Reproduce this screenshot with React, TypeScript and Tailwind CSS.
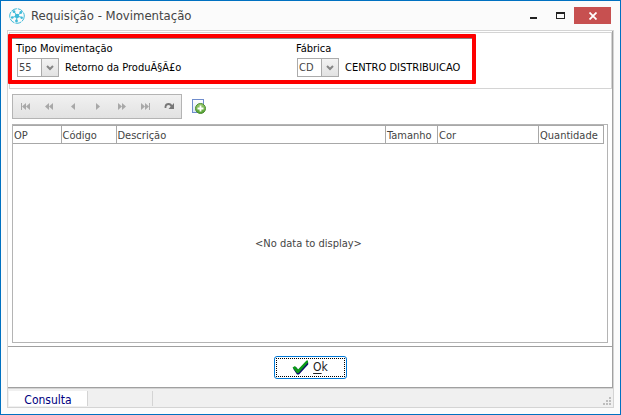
import { useState } from 'react';

const COLUMNS = [
  { label: 'OP', width: 'w-[48px]' },
  { label: 'Código', width: 'w-[55px]' },
  { label: 'Descrição', width: '' },
  { label: 'Tamanho', width: 'w-[52px]' },
  { label: 'Cor', width: 'w-[101px]' },
  { label: 'Quantidade', width: 'w-[65px]' },
];

const NAV_BUTTONS = [
  { label: 'Primeiro', path: 'M1 2h1v7h-1zM6 2v7L2 5.5zM10 2v7L6 5.5z' },
  { label: 'Página anterior', path: 'M5 2v7L1 5.5zM9 2v7L5 5.5z' },
  { label: 'Anterior', path: 'M7 2v7L3 5.5z' },
  { label: 'Próximo', path: 'M4 2v7L8 5.5z' },
  { label: 'Próxima página', path: 'M2 2v7L6 5.5zM6 2v7L10 5.5z' },
  { label: 'Último', path: 'M1 2v7L5 5.5zM5 2v7L9 5.5zM9 2h1v7h-1z' },
];

function AppIcon() {
  return (
    <svg className="w-4 h-4" viewBox="0 0 16 16" fill="none" stroke="#3fbad8">
      <circle cx="8" cy="8" r="7.300" strokeWidth="1" strokeDasharray="6 1" />
      <path d="M8 8L5 3.500M8 8l4-3.500M8 8l5 1.500M8 8l-.5 5M8 8L3 9.500" strokeWidth="1" />
      <g fill="#3fbad8" stroke="none">
        <circle cx="8" cy="8" r="2.200" />
        <circle cx="5" cy="3.700" r="1.400" />
        <circle cx="11.800" cy="4.500" r="1.400" />
        <circle cx="12.700" cy="9.700" r="1.200" />
        <circle cx="7.500" cy="13" r="1.400" />
        <circle cx="3.200" cy="9.500" r="1.300" />
      </g>
    </svg>
  );
}

function AddIcon() {
  return (
    <svg className="w-4 h-4" viewBox="0 0 16 16">
      <defs>
        <linearGradient id="page" x1="0" y1="0" x2="0" y2="1">
          <stop offset="0" stopColor="#ffffff" />
          <stop offset="1" stopColor="#d5e5f5" />
        </linearGradient>
        <linearGradient id="plus" x1="0" y1="0" x2="0" y2="1">
          <stop offset="0" stopColor="#9ccb74" />
          <stop offset="1" stopColor="#4fa02a" />
        </linearGradient>
      </defs>
      <rect x="1.500" y=".5" width="11" height="13" fill="url(#page)" stroke="#6f8ccc" />
      <circle cx="9.500" cy="9.500" r="5" fill="url(#plus)" stroke="#4c8c30" />
      <path d="M9.500 6.500v6M6.500 9.500h6" stroke="#fff" strokeWidth="1.800" />
    </svg>
  );
}

function Combo({ id, label, options, description }: { id: string; label: string; options: string[]; description: string }) {
  const [value, setValue] = useState(options[0]);

  return (
    <div className="flex flex-col gap-[1px]">
      <label htmlFor={id} className="leading-4">{label}</label>
      <div className="flex items-center gap-[6px]">
        <div className="relative ml-[1px]">
          <select
            id={id}
            value={value}
            onChange={e => setValue(e.target.value)}
            className="block w-[42px] h-[19px] appearance-none rounded-none border border-[#ababab] bg-white pl-[1px] pr-4 leading-4 text-[#444]"
          >
            {options.map(o => <option key={o}>{o}</option>)}
          </select>
          <span className="pointer-events-none absolute right-0 top-0 flex h-[19px] w-[18px] items-center justify-center border border-[#ababab] bg-linear-to-b from-[#f3f3f3] to-[#e2e2e2]">
            <svg className="w-[8px] h-[6px]" viewBox="0 0 8 6" fill="none" stroke="#868686" strokeWidth="2">
              <path d="M1 1l3 3 3-3" />
            </svg>
          </span>
        </div>
        <span className="leading-4">{description}</span>
      </div>
    </div>
  );
}

export default function App() {
  return (
    <div className="flex min-h-screen flex-col border border-[#0071c1] bg-[#fbfbfb] px-[6px] pb-[6px] font-['DejaVu_Sans_Condensed','Noto_Sans',sans-serif] text-[11px] text-black">
      <header className="flex h-[29px] items-center">
        <div className="flex flex-1 items-center gap-[6px] pl-[2px]">
          <AppIcon />
          <h1 className="text-[13px] leading-5 text-[#444]">Requisição - Movimentação</h1>
        </div>
        <button aria-label="Minimizar" className="flex h-[17px] w-[27px] items-end justify-center pb-[5px]">
          <span className="h-[2px] w-[7px] bg-[#222]" />
        </button>
        <button aria-label="Maximizar" className="flex h-[17px] w-[27px] items-center justify-center">
          <span className="h-[7px] w-[9px] border border-t-2 border-[#222]" />
        </button>
        <button aria-label="Fechar" className="mr-[3px] flex h-[17px] w-[37px] items-center justify-center bg-[#c75050]">
          <svg className="w-[8px] h-[8px]" viewBox="0 0 8 8" stroke="#fff" strokeWidth="1.800">
            <path d="M.5.5l7 7M7.500.5l-7 7" />
          </svg>
        </button>
      </header>

      <main className="flex flex-1 flex-col border border-[#d4d4d4] bg-white">
        <div className="flex flex-1 flex-col border-r border-[#a0a0a0]">
          <section className="relative ml-[1px] mt-[1px] flex h-[57px] border border-[#d4d4d4] pl-[6px] pt-2">
            <div className="w-[280px]">
              <Combo id="tipo" label="Tipo Movimentação" options={['55']} description="Retorno da ProduÃ§Ã£o" />
            </div>
            <Combo id="fabrica" label="Fábrica" options={['CD']} description="CENTRO DISTRIBUICAO" />
            {/* Highlight */}
            <div className="pointer-events-none absolute -left-[2px] top-[1px] h-[50px] w-[468px] rounded-[1px] border-4 border-[#fe0000] inset-shadow-[0_1px_0_#888]" />
          </section>

          <div className="flex flex-1 flex-col px-1 pb-[3px] pt-[5px]">
            <div className="flex items-center gap-[9px]">
              <div className="flex h-[25px] w-[170px] items-center border border-[#b4b4b4] bg-linear-to-b from-[#f1f1f1] to-[#e2e2e2] pl-[1px]">
                {NAV_BUTTONS.map(b => (
                  <button key={b.label} aria-label={b.label} disabled className="flex h-[23px] w-6 items-center justify-center">
                    <svg className="w-[11px] h-[11px]" viewBox="0 0 11 11" fill="#a8a8a8">
                      <path d={b.path} />
                    </svg>
                  </button>
                ))}
                <button aria-label="Atualizar" className="flex h-[23px] w-6 items-center justify-center">
                  <svg className="w-[11px] h-[11px]" viewBox="0 0 11 11">
                    <path d="M1.500 7V5.500Q2 3 4.500 3Q7 3 7.500 5.500" fill="none" stroke="#777" strokeWidth="1.800" />
                    <path d="M10 2v6H4.500z" fill="#777" />
                  </svg>
                </button>
              </div>
              <button aria-label="Adicionar"><AddIcon /></button>
            </div>

            <div className="mt-[5px] flex flex-1 flex-col border border-[#b4b4b4] pr-[3px]">
              <table className="w-full table-fixed border-collapse text-[#444]">
                <thead>
                  <tr>
                    {COLUMNS.map(c => (
                      <th key={c.label} className={`h-[18px] whitespace-nowrap border-b border-r border-t border-[#a8a8a8] p-0 pl-[1px] pt-[2px] text-left font-normal leading-[15px] ${c.width}`}>
                        {c.label}
                      </th>
                    ))}
                  </tr>
                </thead>
              </table>
              <p className="flex flex-1 items-center justify-center pt-[2px] text-[#444]">&lt;No data to display&gt;</p>
            </div>
          </div>

          <footer className="flex h-[42px] items-center justify-center border-y border-[#a0a0a0]">
            <button className="flex h-[23px] w-[73px] rounded-[3px] border border-[#0078d7] p-[1px]">
              <span className="flex flex-1 items-center justify-center gap-1 border border-dotted border-black text-[#222]">
                <svg className="w-[17px] h-[15px]" viewBox="0 0 17 15">
                  <path d="M1 8.500l3-1.500 2.500 3 9-8.500.7 1v2L7 14.500H5z" fill="#10106a" />
                  <path d="M.5 7.500l2.500-1.500L6 9.500 14.500.5h1.500v2L6.500 13H5z" fill="#0c9a18" />
                </svg>
                <span className="text-[12px] leading-4"><u className="underline-offset-2">O</u>k</span>
              </span>
            </button>
          </footer>
        </div>

        <nav className="flex h-[19px] items-stretch border-t border-[#d4d4d4] bg-[#f0f0f0] pt-[2px]">
          <a href="#consulta" className="mb-[1px] ml-[1px] flex w-[79px] items-end justify-center border-r border-[#d4d4d4] bg-white text-[12px] leading-3 text-[#000080]">Consulta</a>
          <div className="mb-[1px] w-[65px] border-r border-[#d4d4d4]" />
          <svg className="mb-[2px] ml-auto mr-[2px] w-[8px] h-[8px] self-end" viewBox="0 0 8 8" fill="#bdbdbd">
            <path d="M6 0h2v2H6zM3 3h2v2H3zM6 3h2v2H6zM0 6h2v2H0zM3 6h2v2H3zM6 6h2v2H6z" />
          </svg>
        </nav>
      </main>
    </div>
  );
}
